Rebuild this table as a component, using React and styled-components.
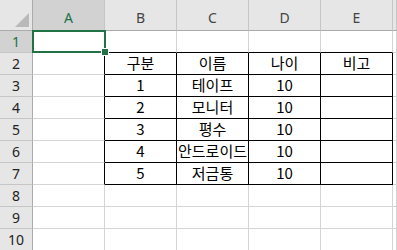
import React from "react";
import styled, { createGlobalStyle } from "styled-components";

const Global = createGlobalStyle`
  html, body {
    margin: 0;
    padding: 0;
    background: #ffffff;
    overflow: hidden;
  }
  body {
    font-family: "Noto Sans CJK KR", "Noto Sans", sans-serif;
  }
`;

const GRID = "#d4d4d4";
const HEAD_LINE = "#ababab";
const GREEN = "#217346";

const Sheet = styled.div`
  position: relative;
  display: grid;
  grid-template-columns: 33px repeat(5, 72px) 1fr;
  grid-template-rows: 31px repeat(10, 22px);
  width: 397px;
  height: 250px;
  overflow: hidden;
`;

const Corner = styled.div`
  position: relative;
  background: #e6e6e6;
  border-right: 1px solid ${HEAD_LINE};
  border-bottom: 1px solid ${HEAD_LINE};
  box-sizing: border-box;
`;

const CornerMark = styled.div`
  position: absolute;
  right: 3px;
  bottom: 3px;
  width: 0;
  height: 0;
  border-left: 14px solid transparent;
  border-bottom: 14px solid #b9b9b9;
`;

const ColHead = styled.div`
  display: flex;
  align-items: flex-end;
  justify-content: center;
  padding-bottom: 5px;
  box-sizing: border-box;
  background: ${(p) => (p.$active ? "#d2d2d2" : "#e6e6e6")};
  color: ${(p) => (p.$active ? GREEN : "#444444")};
  border-right: 1px solid #c6c6c6;
  border-bottom: 1px solid ${HEAD_LINE};
  font-family: "Noto Sans", "Liberation Sans", sans-serif;
  font-size: 14px;
  line-height: 1;
`;

const RowHead = styled.div`
  display: flex;
  align-items: center;
  justify-content: center;
  box-sizing: border-box;
  background: ${(p) => (p.$active ? "#d2d2d2" : "#e6e6e6")};
  color: ${(p) => (p.$active ? GREEN : "#222222")};
  border-right: 1px solid ${HEAD_LINE};
  border-bottom: 1px solid #c6c6c6;
  font-family: "Noto Sans", "Liberation Sans", sans-serif;
  font-size: 14px;
  line-height: 1;
`;

const Cell = styled.div`
  display: flex;
  align-items: flex-end;
  justify-content: center;
  box-sizing: border-box;
  padding-bottom: 1px;
  border-right: 1px solid ${(p) => (p.$right ? "#000000" : GRID)};
  border-bottom: 1px solid ${(p) => (p.$bottom ? "#000000" : GRID)};
  color: #000000;
  font-size: 15px;
  line-height: 20px;
  white-space: nowrap;
`;

const Selection = styled.div`
  position: absolute;
  left: 32px;
  top: 30px;
  width: 74px;
  height: 23px;
  border: 2px solid ${GREEN};
  box-sizing: border-box;
  pointer-events: none;
`;

const Handle = styled.div`
  position: absolute;
  right: -5px;
  bottom: -5px;
  width: 6px;
  height: 6px;
  background: ${GREEN};
  border: 1px solid #ffffff;
`;

const columns = ["A", "B", "C", "D", "E", ""];

const data = [
  ["구분", "이름", "나이", "비고"],
  ["1", "테이프", "10", ""],
  ["2", "모니터", "10", ""],
  ["3", "평수", "10", ""],
  ["4", "안드로이드", "10", ""],
  ["5", "저금통", "10", ""],
];

// table B2:E7 gets black borders
const inTable = (r, c) => r >= 2 && r <= 7 && c >= 1 && c <= 4;

const valueAt = (r, c) => {
  if (inTable(r, c)) return data[r - 2][c - 1];
  return "";
};

export default function App() {
  const rows = Array.from({ length: 10 }, (_, i) => i + 1);
  return (
    <>
      <Global />
      <Sheet>
        <Corner>
          <CornerMark />
        </Corner>
        {columns.map((c, i) => (
          <ColHead key={i} $active={c === "A"}>
            {c}
          </ColHead>
        ))}
        {rows.map((r) => (
          <React.Fragment key={r}>
            <RowHead $active={r === 1}>{r}</RowHead>
            {columns.map((_, c) => (
              <Cell
                key={c}
                $right={inTable(r, c) || inTable(r, c + 1)}
                $bottom={inTable(r, c) || inTable(r + 1, c)}
              >
                {valueAt(r, c)}
              </Cell>
            ))}
          </React.Fragment>
        ))}
        <Selection>
          <Handle />
        </Selection>
      </Sheet>
    </>
  );
}
